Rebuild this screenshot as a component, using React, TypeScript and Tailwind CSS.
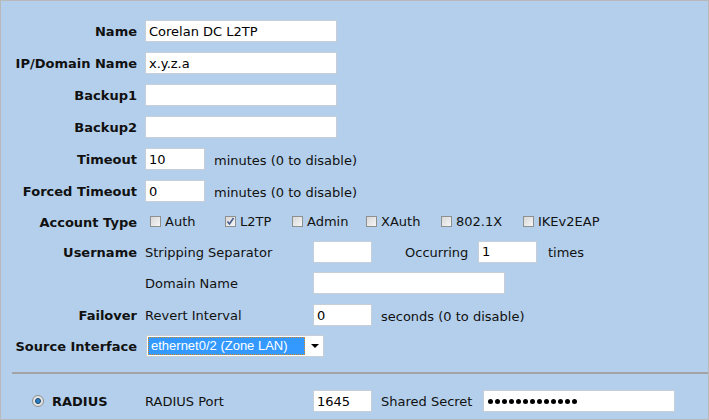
import React from 'react';

const Field: React.FC<{ value?: string; w: string }> = ({ value = '', w }) => (
  <input
    type="text"
    readOnly
    value={value}
    className={`${w} h-[22px] border border-[#c6cfd8] bg-white px-[3px] text-[13px] text-black outline-none font-['DejaVu_Sans',sans-serif]`}
  />
);

const Check: React.FC<{ label: string; checked?: boolean; w: string }> = ({ label, checked, w }) => (
  <div className={`${w} flex items-center`}>
    <span className="relative h-[11px] w-[11px] border border-[#8e8f8f] bg-gradient-to-br from-[#d8d8d8] to-[#f6f6f6]">
      {checked && (
        <svg viewBox="0 0 11 11" className="absolute -left-px -top-px h-[11px] w-[11px]">
          <path d="M2.5 5.5 L4.5 8 L8.5 2" fill="none" stroke="#4a5c8c" strokeWidth="1.6" />
        </svg>
      )}
    </span>
    <span className="ml-[4px] mt-[1px]">{label}</span>
  </div>
);

const Row: React.FC<{ label?: string; h: string; children?: React.ReactNode }> = ({ label, h, children }) => (
  <div className={`flex items-center ${h}`}>
    <div className="mt-[2px] w-[136px] text-right font-bold">{label}</div>
    <div className="ml-[8px] flex items-center">{children}</div>
  </div>
);

const secretDots = Array.from({ length: 13 });

export default function App() {
  return (
    <div className="h-[420px] w-[709px] overflow-hidden border border-[#b9b9b9] bg-[#b3cfeb] font-['DejaVu_Sans',sans-serif] text-[13px] text-[#111]">
      <div className="pt-[14px]">
        <Row label="Name" h="h-[32px]">
          <Field w="w-[192px]" value="Corelan DC L2TP" />
        </Row>
        <Row label="IP/Domain Name" h="h-[32px]">
          <Field w="w-[192px]" value="x.y.z.a" />
        </Row>
        <Row label="Backup1" h="h-[32px]">
          <Field w="w-[192px]" />
        </Row>
        <Row label="Backup2" h="h-[32px]">
          <Field w="w-[192px]" />
        </Row>
        <Row label="Timeout" h="h-[32px]">
          <Field w="w-[60px]" value="10" />
          <span className="ml-[9px] mt-[3px]">minutes (0 to disable)</span>
        </Row>
        <Row label="Forced Timeout" h="h-[32px]">
          <Field w="w-[60px]" value="0" />
          <span className="ml-[9px] mt-[3px]">minutes (0 to disable)</span>
        </Row>
        <Row label="Account Type" h="h-[29px]">
          <div className="flex items-center pl-[5px]">
            <Check w="w-[75px]" label="Auth" />
            <Check w="w-[67px]" label="L2TP" checked />
            <Check w="w-[74px]" label="Admin" />
            <Check w="w-[75px]" label="XAuth" />
            <Check w="w-[82px]" label="802.1X" />
            <Check w="w-[90px]" label="IKEv2EAP" />
          </div>
        </Row>
        <Row label="Username" h="h-[31px]">
          <span className="mt-[2px] w-[168px]">Stripping Separator</span>
          <Field w="w-[59px]" />
          <span className="ml-[33px] mt-[3px] w-[73px]">Occurring</span>
          <Field w="w-[59px]" value="1" />
          <span className="ml-[11px] mt-[3px]">times</span>
        </Row>
        <Row h="h-[32px]">
          <span className="mt-[2px] w-[168px]">Domain Name</span>
          <Field w="w-[192px]" />
        </Row>
        <Row label="Failover" h="h-[32px]">
          <span className="mt-[2px] w-[168px]">Revert Interval</span>
          <Field w="w-[59px]" value="0" />
          <span className="ml-[9px] mt-[3px]">seconds (0 to disable)</span>
        </Row>
        <Row label="Source Interface" h="h-[30px]">
          <div className="ml-px flex h-[22px] w-[178px] items-center border border-[#c6cfd8] bg-white pl-[1px]">
            <div className="flex h-[18px] w-[157px] items-center border border-dotted border-[#d08a2a] bg-[#3399ff] pl-[2px] font-['Liberation_Sans',sans-serif] text-[13px] text-white">
              ethernet0/2 (Zone LAN)
            </div>
            <svg viewBox="0 0 8 4" className="ml-[6px] h-[4px] w-[8px]">
              <path d="M0 0 H8 L4 4 Z" fill="#000" />
            </svg>
          </div>
        </Row>
        <div className="ml-[11px] mt-[11px] h-[2px] bg-[#a3a3a3]" />
        <div className="mt-[16px] flex h-[22px] items-center">
          <div className="flex w-[144px] items-center pl-[31px]">
            <span className="flex h-[12px] w-[12px] items-center justify-center rounded-full border border-[#8e8e8e] bg-[#e4e4e4]">
              <span className="h-[6px] w-[6px] rounded-full border border-[#17466e] bg-[#2a7fc4]" />
            </span>
            <span className="ml-[8px] mt-[2px] font-bold">RADIUS</span>
          </div>
          <span className="mt-[2px] w-[168px]">RADIUS Port</span>
          <Field w="w-[59px]" value="1645" />
          <span className="ml-[9px] mt-[2px] w-[102px]">Shared Secret</span>
          <div className="flex h-[22px] w-[192px] items-center gap-[2px] border border-[#c6cfd8] bg-white pl-[4px] pt-[1px]">
            {secretDots.map((_, i) => (
              <span key={i} className="h-[5px] w-[5px] rounded-full bg-black" />
            ))}
          </div>
        </div>
      </div>
    </div>
  );
}
